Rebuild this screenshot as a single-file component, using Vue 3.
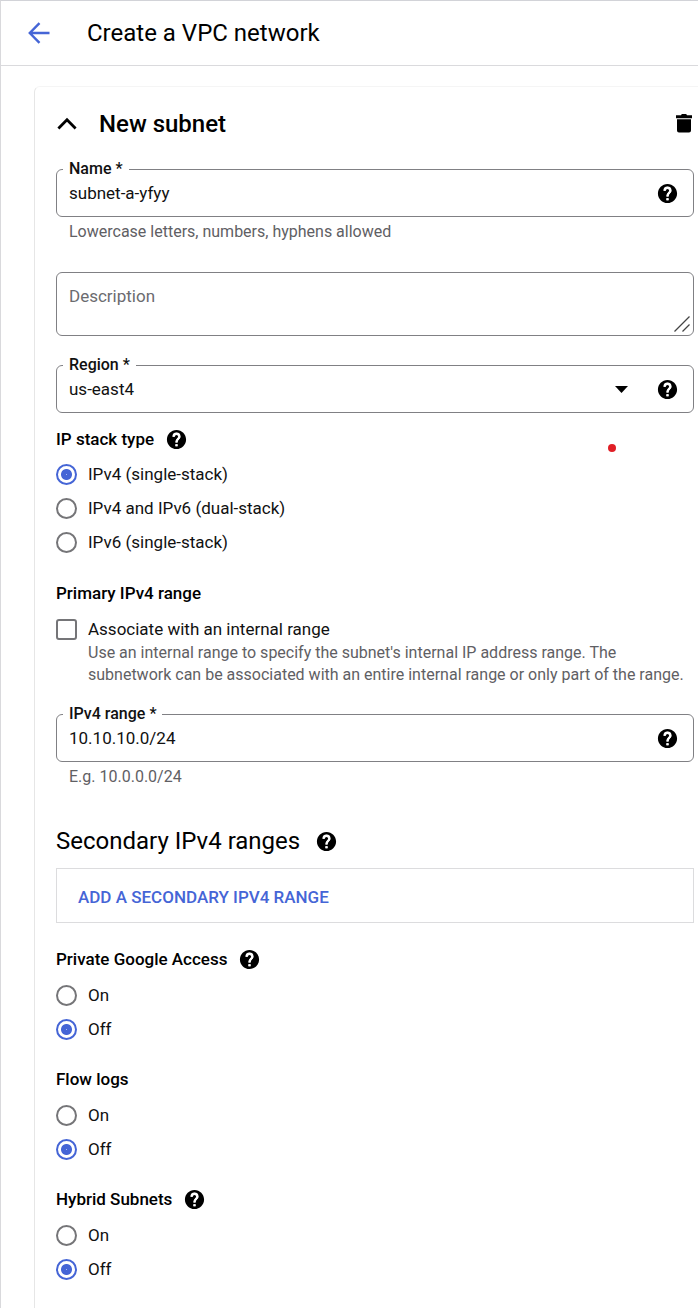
<script setup>
import { ref, h } from 'vue'

const name = ref('subnet-a-yfyy')
const description = ref('')
const region = ref('us-east4')
const stackType = ref('ipv4')
const associate = ref(false)
const range = ref('10.10.10.0/24')

const stackTypes = [
  { value: 'ipv4', label: 'IPv4 (single-stack)' },
  { value: 'dual', label: 'IPv4 and IPv6 (dual-stack)' },
  { value: 'ipv6', label: 'IPv6 (single-stack)' },
]

const toggles = ref([
  { id: 'private-access', label: 'Private Google Access', help: true, value: 'Off' },
  { id: 'flow-logs', label: 'Flow logs', help: false, value: 'Off' },
  { id: 'hybrid-subnets', label: 'Hybrid Subnets', help: true, value: 'Off' },
])

const helpPath =
  'M12 2C6.48 2 2 6.48 2 12s4.48 10 10 10 10-4.48 10-10S17.52 2 12 2zm1 17h-2v-2h2v2zm2.07-7.75l-.9.92C13.45 12.9 13 13.5 13 15h-2v-.5c0-1.1.45-2.1 1.17-2.83l1.24-1.26c.37-.36.59-.86.59-1.41 0-1.1-.9-2-2-2s-2 .9-2 2H8c0-2.21 1.79-4 4-4s4 1.79 4 4c0 .88-.36 1.68-.93 2.25z'

const HelpIcon = () =>
  h('svg', { viewBox: '0 0 24 24', width: 23, height: 23, 'aria-hidden': 'true' }, [
    h('path', { d: helpPath, fill: '#000' }),
    h('path', {
      d: 'M9 9a3 3 0 1 1 6 0c0 1.9-3 2.4-3 6M12 16.9v2.2',
      fill: 'none',
      stroke: '#fff',
      'stroke-width': 2.4,
    }),
  ])
</script>

<template>
  <div class="page">
    <header class="bar">
      <button class="icon" type="button" aria-label="Back">
        <svg width="22" height="22" viewBox="0 0 22 22" fill="none" stroke="#4565d6" stroke-width="2.4">
          <path d="M21.5 11H2M11.5 1.2L1.8 11l9.7 9.8" />
        </svg>
      </button>
      <h1>Create a VPC network</h1>
    </header>

    <main class="card">
      <div class="card-head">
        <button class="icon" type="button" aria-label="Collapse">
          <svg width="22" height="14" viewBox="0 0 22 14" fill="none" stroke="#000" stroke-width="2.8">
            <path d="M2.4 11.4L11 2.8l8.6 8.6" />
          </svg>
        </button>
        <h2>New subnet</h2>
        <button class="icon trash" type="button" aria-label="Delete subnet">
          <svg width="16" height="20" viewBox="0 0 16 20">
            <path d="M0 1.2h5L5.8 0h4.4L11 1.2h5v3H0zM1 5.2h14v11.4a2 2 0 0 1-2 2H3a2 2 0 0 1-2-2z" />
          </svg>
        </button>
      </div>

      <fieldset class="field">
        <legend><label for="name">Name *</label></legend>
        <div class="field-row">
          <input id="name" v-model="name" type="text" />
          <button class="icon" type="button" aria-label="Help for name"><HelpIcon /></button>
        </div>
      </fieldset>
      <p class="hint">Lowercase letters, numbers, hyphens allowed</p>

      <div class="area">
        <textarea v-model="description" placeholder="Description" aria-label="Description"></textarea>
        <svg class="grip" width="16" height="16" viewBox="0 0 16 16" stroke="#444" stroke-width="1.3">
          <path d="M0.5 15.5l15-15M8.5 15.5l7-7" />
        </svg>
      </div>

      <fieldset class="field">
        <legend><label for="region">Region *</label></legend>
        <div class="field-row">
          <select id="region" v-model="region">
            <option value="us-east4">us-east4</option>
          </select>
          <svg class="caret" width="13" height="7" viewBox="0 0 13 7"><path d="M0 0h13L6.5 7z" /></svg>
          <button class="icon" type="button" aria-label="Help for region"><HelpIcon /></button>
        </div>
      </fieldset>

      <section class="stack" role="radiogroup" aria-labelledby="stack-title">
        <div class="title">
          <h3 id="stack-title">IP stack type</h3>
          <button class="icon" type="button" aria-label="Help for IP stack type"><HelpIcon /></button>
        </div>
        <label v-for="s in stackTypes" :key="s.value" class="choice">
          <input v-model="stackType" type="radio" name="stack" :value="s.value" />
          <span>{{ s.label }}</span>
        </label>
        <span class="pointer"></span>
      </section>

      <section class="primary">
        <div class="title"><h3>Primary IPv4 range</h3></div>
        <div class="check">
          <input id="associate" v-model="associate" type="checkbox" aria-describedby="associate-note" />
          <label for="associate">Associate with an internal range</label>
          <p id="associate-note">
            Use an internal range to specify the subnet's internal IP address range. The
            subnetwork can be associated with an entire internal range or only part of the range.
          </p>
        </div>
      </section>

      <fieldset class="field">
        <legend><label for="range">IPv4 range *</label></legend>
        <div class="field-row">
          <input id="range" v-model="range" type="text" />
          <button class="icon" type="button" aria-label="Help for IPv4 range"><HelpIcon /></button>
        </div>
      </fieldset>
      <p class="hint">E.g. 10.0.0.0/24</p>

      <div class="secondary">
        <h2>Secondary IPv4 ranges</h2>
        <button class="icon" type="button" aria-label="Help for secondary ranges"><HelpIcon /></button>
      </div>
      <div class="add">
        <button type="button">ADD A SECONDARY IPV4 RANGE</button>
      </div>

      <section v-for="t in toggles" :key="t.id" class="toggle" role="radiogroup" :aria-labelledby="t.id">
        <div class="title">
          <h3 :id="t.id">{{ t.label }}</h3>
          <button v-if="t.help" class="icon" type="button" :aria-label="'Help for ' + t.label"><HelpIcon /></button>
        </div>
        <label v-for="o in ['On', 'Off']" :key="o" class="choice">
          <input v-model="t.value" type="radio" :name="t.id" :value="o" />
          <span>{{ o }}</span>
        </label>
      </section>
    </main>
  </div>
</template>

<style>
body {
  margin: 0;
  background: #fff;
}
</style>

<style scoped>
.page {
  box-sizing: border-box;
  display: flex;
  flex-direction: column;
  min-height: 100vh;
  border-top: 1px solid #d2d3d8;
  border-left: 1px solid #d9d9dc;
  font-family: Roboto, "Liberation Sans", sans-serif;
  font-size: 17px;
  line-height: 24px;
  color: #111;
}

h1, h2, h3, p {
  margin: 0;
}

h1, h2 {
  font-size: 24px;
  line-height: 32px;
  font-weight: 400;
  color: #000;
}

h3 {
  font-size: 17px;
  line-height: 24px;
  font-weight: 500;
  color: #000;
}

input, select, textarea, button {
  font: inherit;
  color: inherit;
}

.icon {
  display: flex;
  flex: none;
  padding: 0;
  border: 0;
  background: none;
}

.bar {
  display: flex;
  align-items: center;
  gap: 37px;
  height: 64px;
  padding-left: 27px;
  border-bottom: 1px solid #dadadd;
}

.card {
  display: flex;
  flex: 1;
  flex-direction: column;
  margin: 20px 0 0 33px;
  padding: 18px 4px 0 21px;
  border-top: 1px solid #f5f5f5;
  border-left: 1px solid #e6e6e6;
  border-top-left-radius: 6px;
}

.card-head {
  display: flex;
  align-items: center;
  gap: 21px;
  height: 38px;
  margin-bottom: 18px;
}

.card-head h2 {
  flex: 1;
  font-weight: 500;
}

.trash {
  padding-right: 2px;
}

.field {
  min-width: 0;
  margin: 0;
  padding: 0 14px 7px 6px;
  border: 1px solid #808084;
  border-radius: 6px;
}

.field legend {
  padding: 0 6px;
  font-size: 16px;
  line-height: 16px;
  font-weight: 500;
}

.field-row {
  display: flex;
  align-items: center;
  height: 32px;
  padding-left: 6px;
}

.field input, .field select {
  flex: 1;
  min-width: 0;
  height: 32px;
  padding: 0;
  border: 0;
  outline: 0;
  background: none;
  appearance: none;
}

.caret {
  margin-right: 28px;
}

.hint {
  margin: 5px 0 0 13px;
  font-size: 16px;
  line-height: 20px;
  color: #5f6064;
}

.area {
  position: relative;
  display: flex;
  margin: 30px 0 21px;
}

.area textarea {
  box-sizing: border-box;
  flex: 1;
  height: 64px;
  padding: 11px 12px;
  border: 1px solid #808084;
  border-radius: 6px;
  outline: 0;
  resize: none;
}

.area textarea::placeholder {
  color: #6b6b6f;
  opacity: 1;
}

.grip {
  position: absolute;
  right: 4px;
  bottom: 4px;
}

.title {
  display: flex;
  align-items: center;
  gap: 11px;
  height: 24px;
}

.choice {
  display: flex;
  align-items: center;
  gap: 11px;
  height: 34px;
}

.choice input, .check input {
  box-sizing: border-box;
  flex: none;
  width: 21px;
  height: 21px;
  margin: 0;
  border: 2px solid #757578;
  border-radius: 50%;
  appearance: none;
}

.choice input:checked {
  border-color: #4565d6;
  background: radial-gradient(circle, #a9b8ee 0, #4565d6 1px, #4565d6 5px, transparent 6px);
}

.stack {
  position: relative;
  margin-top: 14px;
  padding-bottom: 22px;
}

.stack .title {
  margin-bottom: 6px;
}

.pointer {
  position: absolute;
  top: 17px;
  right: 78px;
  width: 8px;
  height: 8px;
  border-radius: 50%;
  background: #e01f26;
}

.primary {
  margin-bottom: 20px;
}

.check {
  display: grid;
  grid-template-columns: 21px 1fr;
  column-gap: 11px;
  row-gap: 1px;
  align-items: center;
  margin-top: 12px;
}

.check input {
  border-radius: 3px;
}

.check p {
  grid-column: 2;
  font-size: 16px;
  line-height: 22px;
  color: #5f6064;
}

.secondary {
  display: flex;
  align-items: center;
  gap: 15px;
  margin: 38px 0 11px;
}

.add {
  display: flex;
  margin-bottom: 3px;
  padding: 16px 21px 13px;
  border: 1px solid #dcdcde;
}

.add button {
  padding: 0;
  border: 0;
  background: none;
  font-weight: 500;
  color: #4565d6;
}

.toggle {
  margin-top: 21px;
}

.toggle .title {
  margin-bottom: 7px;
}
</style>
